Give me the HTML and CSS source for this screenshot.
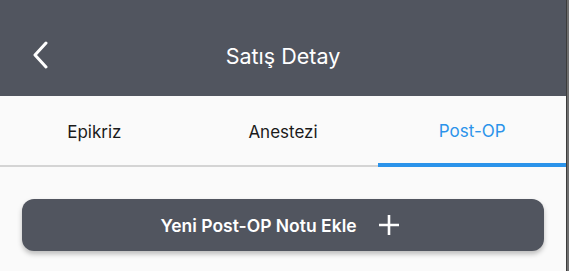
FILE: index.html
```html
<!DOCTYPE html>
<html lang="tr">
<head>
<meta charset="utf-8">
<title>Satış Detay</title>
<link rel="stylesheet" href="styles.css">
</head>
<body>
<div class="frame">
  <div class="screen">
    <header class="nav">
      <button class="back" aria-label="Geri">
        <svg width="16" height="28" viewBox="0 0 16 28"><path d="M14 2 L3 14 L14 26" fill="none" stroke="#fff" stroke-width="3" stroke-linecap="round" stroke-linejoin="round"/></svg>
      </button>
      <h1 class="title">Satış Detay</h1>
    </header>
    <nav class="tabs">
      <div class="tab">Epikriz</div>
      <div class="tab">Anestezi</div>
      <div class="tab active">Post-OP</div>
    </nav>
    <main class="content">
      <button class="add-btn">
        <span>Yeni Post-OP Notu Ekle</span>
        <svg width="22" height="22" viewBox="0 0 22 22"><path d="M11 1 V21 M1 11 H21" stroke="#fff" stroke-width="2.6"/></svg>
      </button>
    </main>
  </div>
  <div class="edge"></div>
</div>
</body>
</html>
```
FILE: styles.css
```css
* { box-sizing: border-box; }
html, body { margin: 0; padding: 0; }
body {
  font-family: Inter, "Noto Sans", "Liberation Sans", sans-serif;
  background: #fafafa;
  width: 569px;
  height: 271px;
  overflow: hidden;
}
.frame { display: flex; height: 271px; }
.screen { width: 566px; display: flex; flex-direction: column; background: #fafafa; }
.edge { width: 3px; background: #6f6f6f; border-left: 1px solid #3c3c3c; }
.nav {
  height: 96px;
  background: #51555f;
  display: flex;
  align-items: center;
  justify-content: center;
  position: relative;
  padding-top: 16px;
}
.back {
  position: absolute;
  left: 32px;
  top: 41px;
  background: none;
  border: 0;
  padding: 0;
  display: flex;
}
.title {
  margin: 0;
  color: #fff;
  font-size: 21.5px;
  font-weight: 400;
}
.tabs {
  display: grid;
  grid-template-columns: 1fr 1fr 1fr;
  height: 71px;
  border-bottom: 2px solid #d4d4d4;
}
.tab {
  display: flex;
  align-items: center;
  justify-content: center;
  font-size: 17px;
  color: #1a1a1a;
  padding-top: 2px;
}
.tab.active {
  color: #2b93ea;
  margin-bottom: -2px;
  border-bottom: 4px solid #2b93ea;
  margin-left: 1px;
}
.content { padding: 32px 22px 0; }
.add-btn {
  width: 100%;
  height: 52px;
  border: 0;
  border-radius: 12px;
  background: #51555f;
  color: #fff;
  font-family: inherit;
  font-size: 17.5px;
  font-weight: 600;
  display: flex;
  align-items: center;
  justify-content: center;
  gap: 21px;
  box-shadow: 0 3px 5px rgba(0,0,0,0.25);
  padding: 0 6px 0 0;
}
```
